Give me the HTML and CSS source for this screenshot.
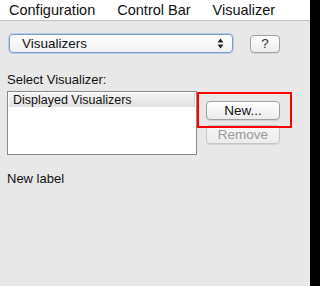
FILE: index.html
```html
<!DOCTYPE html>
<html lang="en">
<head>
    <meta charset="UTF-8">
    <meta name="viewport" content="width=device-width, initial-scale=1.0">
    <title>Visualizers</title>
    <link rel="stylesheet" href="styles.css">
</head>
<body>
    <div class="window">
        <div class="main">
            <div class="menubar">
                <span class="menu-item">Configuration</span>
                <span class="menu-item">Control Bar</span>
                <span class="menu-item">Visualizer</span>
            </div>
            <div class="panel">
                <div class="top-row">
                    <div class="combo">
                        <span>Visualizers</span>
                        <svg class="combo-arrows" width="7" height="11" viewBox="0 0 7 11">
                            <path d="M0.5 4.5 L3.5 0.5 L6.5 4.5 Z" fill="#222"/>
                            <path d="M0.5 6.5 L3.5 10.5 L6.5 6.5 Z" fill="#222"/>
                        </svg>
                    </div>
                    <button class="btn help-btn">?</button>
                </div>
                <div class="section-label">Select Visualizer:</div>
                <div class="list-row">
                    <div class="list-box">
                        <div class="list-header">Displayed Visualizers</div>
                    </div>
                    <div class="list-buttons">
                        <button class="btn">New...</button>
                        <button class="btn" disabled>Remove</button>
                        <div class="highlight"></div>
                    </div>
                </div>
                <div class="new-label">New label</div>
            </div>
        </div>
        <div class="edge"></div>
    </div>
</body>
</html>
```
FILE: styles.css
```css
body {
    margin: 0;
    font-family: "Liberation Sans", Arial, sans-serif;
    font-size: 13px;
    color: #111;
    background-color: #000;
}
.window {
    display: flex;
    height: 286px;
}
.main {
    width: 310px;
    display: flex;
    flex-direction: column;
    background-color: #e8e8e8;
}
.edge {
    flex: 1;
    background-color: #000;
}
.menubar {
    height: 20px;
    background-color: #fff;
    border-bottom: 1px solid #c4c4c4;
    display: flex;
    align-items: center;
    gap: 22px;
    padding-left: 9px;
    font-size: 14.5px;
    color: #111;
}
.panel {
    padding: 13px 0 0 7px;
}
.top-row {
    display: flex;
    align-items: center;
}
.combo {
    height: 17px;
    margin-left: 2px;
    border: 1px solid #7d9cc8;
    border-radius: 4px;
    background: linear-gradient(#ffffff, #f0f0f0);
    box-shadow: 0 0 0 1px #b9cce6;
    display: flex;
    align-items: center;
    justify-content: space-between;
    padding: 0 8px 0 12px;
    width: 202px;
    font-size: 13.5px;
}
.combo-arrows {
    display: block;
}
.btn {
    font-family: "Liberation Sans", Arial, sans-serif;
    font-size: 13.5px;
    color: #111;
    background: linear-gradient(#ffffff, #ececec);
    border: 1px solid #a0a0a0;
    border-radius: 4px;
    padding: 0;
    height: 19px;
    width: 74px;
    box-shadow: 0 1px 0 rgba(0, 0, 0, 0.08);
}
.btn:disabled {
    color: #999;
    border-color: #c6c6c6;
    background: linear-gradient(#f6f6f6, #ececec);
}
.help-btn {
    width: 30px;
    height: 18px;
    margin-left: 17px;
    color: #333;
}
.section-label {
    margin-top: 19px;
    line-height: 15px;
}
.list-row {
    display: flex;
    margin-top: 4px;
}
.list-box {
    width: 186px;
    height: 60px;
    border: 1px solid #8a8a8a;
    background-color: #fff;
    padding: 1px;
}
.list-header {
    height: 14px;
    width: 181px;
    padding-left: 4px;
    line-height: 14px;
    background: linear-gradient(#f4f4f4, #e2e2e2);
    border-right: 1px solid #d0d0d0;
    font-size: 12.5px;
}
.list-buttons {
    position: relative;
    display: flex;
    flex-direction: column;
    gap: 5px;
    margin-left: 9px;
    padding-top: 10px;
}
.highlight {
    position: absolute;
    z-index: 2;
    left: -9px;
    top: 1px;
    width: 91px;
    height: 32px;
    border: 2px solid #ff0000;
}
.new-label {
    margin-top: 16px;
    line-height: 15px;
}
```
